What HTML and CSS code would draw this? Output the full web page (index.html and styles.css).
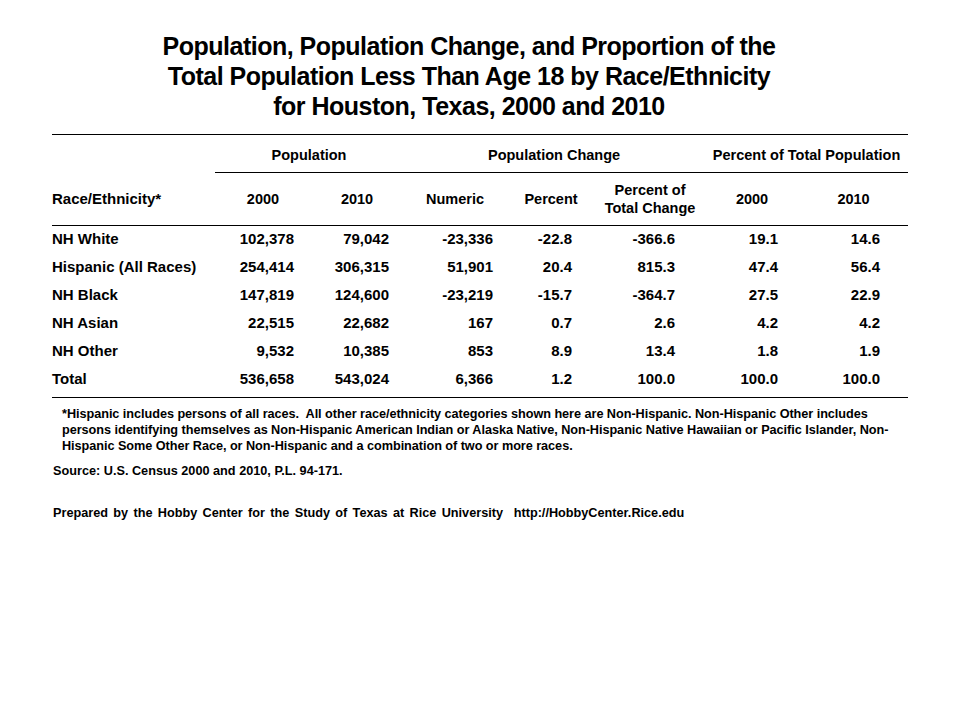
FILE: index.html
```html
<!DOCTYPE html>
<html>
<head>
<meta charset="utf-8">
<link rel="stylesheet" href="styles.css">
</head>
<body>
<div class="page">
  <h1 class="title">Population, Population Change, and Proportion of the<br>Total Population Less Than Age 18 by Race/Ethnicity<br>for Houston, Texas, 2000 and 2010</h1>
  <table class="data">
    <colgroup>
      <col class="c1"><col class="c2"><col class="c3"><col class="c4"><col class="c5"><col class="c6"><col class="c7"><col class="c8">
    </colgroup>
    <thead>
      <tr class="group">
        <th></th>
        <th colspan="2" class="grp">Population</th>
        <th colspan="3" class="grp">Population Change</th>
        <th colspan="2" class="grp">Percent of Total Population</th>
      </tr>
      <tr class="cols">
        <th class="label">Race/Ethnicity*</th>
        <th>2000</th><th>2010</th><th>Numeric</th><th>Percent</th>
        <th>Percent of<br>Total Change</th><th>2000</th><th>2010</th>
      </tr>
    </thead>
    <tbody>
      <tr class="first"><td class="label">NH White</td><td>102,378</td><td>79,042</td><td>-23,336</td><td>-22.8</td><td>-366.6</td><td>19.1</td><td>14.6</td></tr>
      <tr><td class="label">Hispanic (All Races)</td><td>254,414</td><td>306,315</td><td>51,901</td><td>20.4</td><td>815.3</td><td>47.4</td><td>56.4</td></tr>
      <tr><td class="label">NH Black</td><td>147,819</td><td>124,600</td><td>-23,219</td><td>-15.7</td><td>-364.7</td><td>27.5</td><td>22.9</td></tr>
      <tr><td class="label">NH Asian</td><td>22,515</td><td>22,682</td><td>167</td><td>0.7</td><td>2.6</td><td>4.2</td><td>4.2</td></tr>
      <tr><td class="label">NH Other</td><td>9,532</td><td>10,385</td><td>853</td><td>8.9</td><td>13.4</td><td>1.8</td><td>1.9</td></tr>
      <tr class="total"><td class="label">Total</td><td>536,658</td><td>543,024</td><td>6,366</td><td>1.2</td><td>100.0</td><td>100.0</td><td>100.0</td></tr>
    </tbody>
  </table>
  <p class="note">*Hispanic includes persons of all races.&nbsp; All other race/ethnicity categories shown here are Non-Hispanic. Non-Hispanic Other includes<br>persons identifying themselves as Non-Hispanic American Indian or Alaska Native, Non-Hispanic Native Hawaiian or Pacific Islander, Non-<br>Hispanic Some Other Race, or Non-Hispanic and a combination of two or more races.</p>
  <p class="source">Source: U.S. Census 2000 and 2010, P.L. 94-171.</p>
  <p class="prepared">Prepared by the Hobby Center for the Study of Texas at Rice University&nbsp; http://HobbyCenter.Rice.edu</p>
</div>
</body>
</html>
```
FILE: styles.css
```css
html, body {
  margin: 0;
  padding: 0;
  background: #fff;
}
body {
  font-family: "Liberation Sans", Arial, sans-serif;
  color: #000;
}
.page {
  width: 856px;
  padding: 31px 52px 0 52px;
}
.title {
  margin: 0;
  padding-right: 22px;
  font-size: 25px;
  letter-spacing: -0.5px;
  line-height: 30px;
  font-weight: bold;
  text-align: center;
  white-space: nowrap;
}
.data {
  margin-top: 13px;
  width: 856px;
  border-collapse: collapse;
  table-layout: fixed;
  font-size: 15px;
  font-weight: bold;
}
.c1 { width: 163px; }
.c2 { width: 96px; }
.c3 { width: 92px; }
.c4 { width: 104px; }
.c5 { width: 88px; }
.c6 { width: 110px; }
.c7 { width: 94px; }
.c8 { width: 109px; }
.data th {
  font-weight: bold;
  font-size: 14.5px;
  text-align: center;
  padding: 0;
  white-space: nowrap;
}
.data .label {
  text-align: left;
}
.data th.label {
  font-size: 15px;
}
.group {
  height: 38px;
}
.group th {
  border-top: 1px solid #000;
  padding-top: 2px;
}
.group th.grp {
  border-bottom: 1px solid #000;
}
.cols {
  height: 53px;
}
.cols th {
  line-height: 18px;
  border-bottom: 1px solid #000;
}
.data tbody tr {
  height: 28px;
}
.data tbody tr.first {
  height: 27px;
}
.data td {
  padding: 0;
  line-height: 18px;
  text-align: right;
  white-space: nowrap;
}
.data td:nth-child(2) { padding-right: 17px; }
.data td:nth-child(3) { padding-right: 14px; }
.data td:nth-child(4) { padding-right: 14px; }
.data td:nth-child(5) { padding-right: 23px; }
.data td:nth-child(6) { padding-right: 30px; }
.data td:nth-child(7) { padding-right: 21px; }
.data td:nth-child(8) { padding-right: 28px; }
.data td.label { text-align: left; }
.data tbody tr.total {
  height: 33px;
}
.total td {
  border-bottom: 1px solid #000;
  padding-bottom: 3px;
}
.note {
  margin: 8px 0 0 10px;
  font-size: 12.7px;
  letter-spacing: -0.05px;
  line-height: 16px;
  font-weight: bold;
  white-space: nowrap;
}
.source {
  margin: 9px 0 0 1px;
  font-size: 12.7px;
  line-height: 16px;
  font-weight: bold;
}
.prepared {
  margin: 26px 0 0 1px;
  font-size: 12.7px;
  line-height: 16px;
  font-weight: bold;
  word-spacing: 1.8px;
}
```
